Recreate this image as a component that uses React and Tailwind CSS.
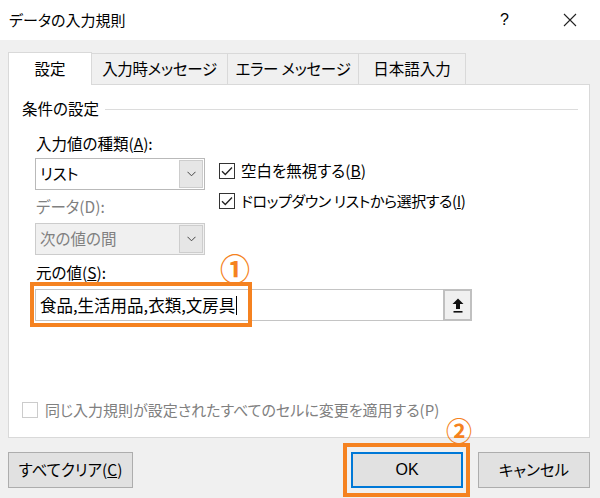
import React from 'react';

const Check = ({ checked, disabled }) => (
  <div className={`w-[16px] h-[16px] border flex items-center justify-center bg-white ${disabled ? 'border-[#cccccc]' : 'border-[#333333]'}`}>
    {checked && (
      <svg width="12" height="10" viewBox="0 0 12 10">
        <path d="M1 5.2 L4.3 8.5 L11 1.5" fill="none" stroke="#222" strokeWidth="1.3" />
      </svg>
    )}
  </div>
);

const Chevron = () => (
  <svg width="9" height="6" viewBox="0 0 9 6">
    <path d="M0.5 0.8 L4.5 4.8 L8.5 0.8" fill="none" stroke="#444" strokeWidth="1" />
  </svg>
);

const Combo = ({ value, disabled }) => (
  <div className={`h-[32px] w-[170px] border flex items-stretch ${disabled ? 'bg-[#f0f0f0] border-[#cccccc] text-[#808080]' : 'bg-white border-[#b9b9b9]'}`}>
    <div className="flex-1 flex items-center pl-[4px]">{value}</div>
    <div className="w-[24px] my-px mr-px bg-[#e6e6e6] border border-[#cdcdcd] flex items-center justify-center">
      <Chevron />
    </div>
  </div>
);

export default function App() {
  return (
    <div className="relative w-[600px] h-[498px] overflow-hidden bg-[#f0f0f0] flex flex-col text-[15.5px] text-black font-['Noto_Sans_CJK_JP',sans-serif] [font-feature-settings:'palt']">
      {/* title bar */}
      <div className="h-[40px] bg-white flex items-center pl-[9px] pr-[23px] shrink-0">
        <span className="text-[15px]">データの入力規則</span>
        <span className="ml-auto text-[16px] font-['Liberation_Sans',sans-serif]">?</span>
        <svg className="ml-[54px]" width="14" height="14" viewBox="0 0 14 14">
          <path d="M1 1 L13 13 M13 1 L1 13" stroke="#222" strokeWidth="1.1" />
        </svg>
      </div>

      <div className="pl-[8px] pr-[10px] flex flex-col">
        {/* tabs */}
        <div className="mt-[12px] flex items-end h-[32px]">
          <div className="w-[84px] h-[33px] bg-white border border-b-0 border-[#d9d9d9] flex items-center justify-center relative z-10 -mb-px">設定</div>
          <div className="w-[136px] h-[31px] border border-l-0 border-b-0 border-[#d9d9d9] flex items-center justify-center tracking-[-0.3px]">入力時メッセージ</div>
          <div className="w-[131px] h-[31px] border border-l-0 border-b-0 border-[#d9d9d9] flex items-center justify-center tracking-[-0.3px]">エラー メッセージ</div>
          <div className="w-[107px] h-[31px] border border-l-0 border-b-0 border-[#d9d9d9] flex items-center justify-center">日本語入力</div>
        </div>

        {/* panel */}
        <div className="h-[354px] bg-white border border-[#d9d9d9] flex flex-col pl-[13px]">
          <div className="mt-[13px] h-[22px] flex items-center">
            <span>条件の設定</span>
            <div className="flex-1 h-px bg-[#dcdcdc] ml-[6px] mr-[11px]" />
          </div>

          <div className="ml-[13px] flex flex-col">
            <div className="mt-[13px] h-[22px] flex items-center pl-px">入力値の種類(<span className="underline">A</span>):</div>
            <div className="mt-[3px] flex items-start">
              <div className="flex flex-col">
                <Combo value="リスト" />
                <div className="mt-[6px] h-[22px] flex items-center pl-px text-[#808080]">データ(D):</div>
                <div className="mt-[5px]">
                  <Combo value="次の値の間" disabled />
                </div>
              </div>
              <div className="ml-[14px] -mt-[2px] flex flex-col">
                <div className="h-[30px] flex items-center gap-[6px]">
                  <Check checked />
                  <span>空白を無視する(<span className="underline">B</span>)</span>
                </div>
                <div className="h-[30px] flex items-center gap-[6px]">
                  <Check checked />
                  <span className="text-[15px] tracking-[-0.4px]">ドロップダウン リストから選択する(<span className="underline">I</span>)</span>
                </div>
              </div>
            </div>
            <div className="mt-[7px] h-[22px] flex items-center pl-px">元の値(<span className="underline">S</span>):</div>
            <div className="mt-[5px] h-[32px] w-[437px] border border-[#c4c4c4] bg-white flex items-stretch">
              <div className="flex-1 flex items-center pl-[4px] text-[16.5px]">
                食品,生活用品,衣類,文房具
                <span className="ml-px w-px h-[19px] bg-black" />
              </div>
              <div className="w-[29px] -my-px -mr-px border-2 border-[#c0c0c0] bg-[#f0f0f0] flex items-center justify-center">
                <svg width="12" height="15" viewBox="0 0 12 15">
                  <path d="M6 0.5 L11.5 6 L8 6 L8 11 L4 11 L4 6 L0.5 6 Z" fill="#111" />
                  <rect x="1.5" y="13" width="9" height="1.6" fill="#111" />
                </svg>
              </div>
            </div>
          </div>

          <div className="mt-auto mb-[16px] h-[22px] flex items-center gap-[7px] text-[#808080]">
            <Check disabled />
            <span className="text-[15px]">同じ入力規則が設定されたすべてのセルに変更を適用する(P)</span>
          </div>
        </div>

        {/* buttons */}
        <div className="mt-[14px] flex items-center h-[36px]">
          <div className="w-[125px] h-[36px] bg-[#e1e1e1] border border-[#adadad] flex items-center justify-center">
            すべてクリア(<span className="underline">C</span>)
          </div>
          <div className="ml-auto w-[112px] h-[36px] bg-[#e1e1e1] border-2 border-[#0078d7] flex items-center justify-center font-['Liberation_Sans',sans-serif] text-[16px]">
            OK
          </div>
          <div className="ml-[15px] w-[112px] h-[36px] bg-[#e1e1e1] border border-[#adadad] flex items-center justify-center">
            キャンセル
          </div>
        </div>
      </div>

      {/* annotations */}
      <div className="absolute left-[30px] top-[282px] w-[222px] h-[45px] border-4 border-[#f58220]" />
      <div className="absolute left-[220px] top-[252px] text-[30px] leading-none font-bold text-[#f58220]">①</div>
      <div className="absolute left-[343px] top-[443px] w-[127px] h-[54px] border-4 border-[#f58220]" />
      <div className="absolute left-[446px] top-[417px] text-[26px] leading-[26px] h-[26px] font-bold text-[#f58220]">②</div>
    </div>
  );
}
